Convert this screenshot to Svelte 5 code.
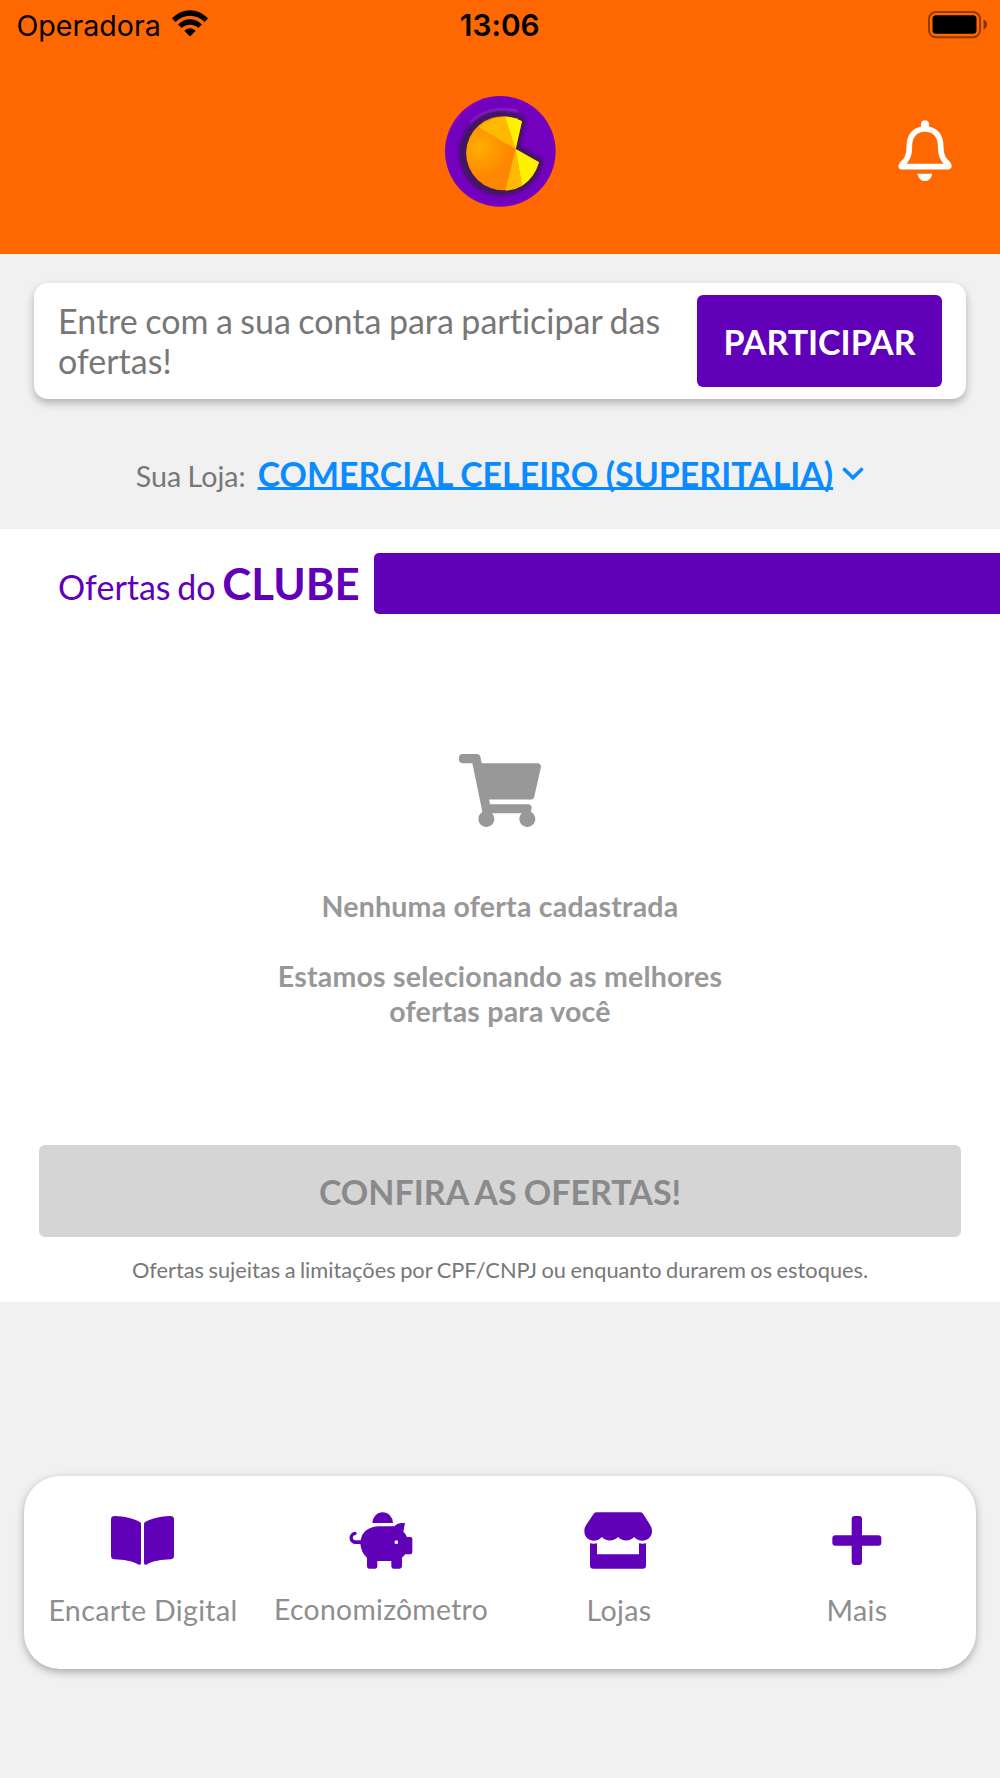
<script lang="ts">
  const store = 'COMERCIAL CELEIRO (SUPERITALIA)';

  const tabs = [
    {
      label: 'Encarte Digital',
      viewBox: '309 150 240 180',
      path: 'M345 168C372 169 400 175 418 185Q423 187 423 191V309Q423 316 416 314C397 303 370 299 343 298Q333 297 333 288V178Q333 168 345 168ZM510 168C483 169 455 175 437 185Q432 187 432 191V309Q432 316 439 314C458 303 485 299 512 298Q522 297 522 288V178Q522 168 510 168Z'
    },
    {
      label: 'Economizômetro',
      viewBox: '1023 150 240 180',
      small: true,
      path: 'M1117 189A31 32 0 0 1 1179 189ZM1133 199H1183Q1192 189 1204 189H1215L1210 215Q1217 221 1221 231H1231Q1237 231 1237 237V277Q1237 283 1231 283H1216L1206 293V319Q1206 326 1199 326H1180Q1174 326 1174 319V303H1132V319Q1132 326 1126 326H1107Q1101 326 1101 319V293Q1084 279 1081 252H1068A18 18 0 0 1 1066 215Q1070 215 1070 220Q1070 225 1066 225A8 8 0 0 0 1067 241H1082Q1088 204 1133 199ZM1189 241A5.5 5.5 0 1 0 1189 252A5.5 5.5 0 1 0 1189 241Z'
    },
    {
      label: 'Lojas',
      viewBox: '237 150 240 180',
      path: 'M291 157H420Q426 157 429 161L450 194Q456 203 456 213C456 243 420 251 402 231C392 244 366 245 354 231C342 245 316 244 306 231C288 251 253 243 253 213Q253 203 258 196L281 161Q284 157 291 157ZM270 250Q281 252 291 250V283H417V250Q428 252 438 250V317Q438 326 429 326H280Q270 326 270 317Z'
    },
    {
      label: 'Mais',
      viewBox: '951 150 240 180',
      path: 'M1064 168H1077Q1086 168 1086 177V226H1135Q1144 226 1144 235V248Q1144 257 1135 257H1086V306Q1086 315 1077 315H1064Q1055 315 1055 306V257H1006Q997 257 997 248V235Q997 226 1006 226H1055V177Q1055 168 1064 168Z'
    }
  ];
</script>

<svelte:head>
  <title>Ofertas do Clube</title>
</svelte:head>

<main class="app">
  <header>
    <div class="status">
      <div class="carrier">
        <span>Operadora</span>
        <svg width="36" height="27" viewBox="0 0 36 27">
          <path d="M0 8.5C10-2.5 26-2.5 36 8.5L32.5 12C24 3.7 12 3.7 3.5 12Z" />
          <path d="M6 14.5C13 7.5 23 7.5 30 14.5L26.3 18C21.5 13.8 14.5 13.8 9.7 18Z" />
          <path d="M12.3 20.7Q18 16 23.7 20.7L18 26.5Z" />
        </svg>
      </div>
      <strong>13:06</strong>
      <div class="battery">
        <svg width="60" height="28" viewBox="0 0 60 28">
          <rect x="1" y="1" width="51" height="25.3" rx="7" fill="none" stroke="#000" stroke-opacity=".42" stroke-width="2" />
          <rect x="4.5" y="4.3" width="44" height="18.5" rx="3.5" />
          <path d="M55.6 8.5Q59 10.5 59 13.6Q59 16.7 55.6 18.7Z" fill-opacity=".5" />
        </svg>
      </div>
    </div>
    <div class="brand">
      <svg class="logo" width="112" height="112" viewBox="42 45 336 336">
        <defs>
          <radialGradient id="coin" cx="148" cy="203" r="90" gradientUnits="userSpaceOnUse">
            <stop offset="0" stop-color="#ffae00" />
            <stop offset="1" stop-color="#ff8700" />
          </radialGradient>
          <linearGradient id="rim" x1="0" y1="0" x2="1" y2="1">
            <stop offset="0" stop-color="#b500ef" />
            <stop offset=".2" stop-color="#7500bf" />
            <stop offset="1" stop-color="#7500bf" />
          </linearGradient>
          <filter id="soft" x="-20%" y="-20%" width="140%" height="140%">
            <feGaussianBlur stdDeviation="2.5" />
          </filter>
        </defs>
        <circle cx="211" cy="214" r="166" fill="url(#rim)" />
        <circle cx="212" cy="215" r="161" fill="#7200bd" />
        <path d="M122 130Q172 76 262 94" fill="none" stroke="#9a40d4" stroke-width="5" filter="url(#soft)" />
        <path d="M257 207L276 124A111 111 0 1 0 327 247Z" fill="#431264" stroke="#431264" stroke-width="32" stroke-linejoin="round" transform="translate(-5 0)" filter="url(#soft)" />
        <path d="M257 207L276 124A111 111 0 1 0 327 247Z" fill="url(#coin)" />
        <path d="M257 207L147 142Q179 110 225 110Z" fill="#ffb900" />
        <path d="M257 207L225 110Q254 111 276 124Z" fill="#fff000" />
        <path d="M257 207L327 247Q313 294 276 318Z" fill="#fff000" />
        <path d="M257 207L276 318Q254 331 226 332Z" fill="#ffb900" />
      </svg>
      <button class="bell" aria-label="Notificações">
        <svg width="54" height="62" viewBox="114 362 162 186">
          <path d="M195 389C164 389 148 411 148 440C148 470 141 482 127 494Q120 502 127 502H263Q270 502 264 494C250 482 242 470 242 440C242 411 226 389 195 389Z" fill="none" stroke="#fff" stroke-width="17" />
          <path d="M183 390V375A12 12 0 0 1 207 375V390ZM172 523H217Q212 545 195 545Q177 545 172 523Z" fill="#fff" />
        </svg>
      </button>
    </div>
  </header>

  <section class="join">
    <p>Entre com a sua conta para participar das ofertas!</p>
    <button>PARTICIPAR</button>
  </section>

  <div class="store">
    <span>Sua Loja:</span>
    <a href="#loja">{store}</a>
    <svg width="22" height="14" viewBox="0 0 22 14">
      <path d="M2.5 2.5L11 10.8L19.5 2.5" fill="none" stroke="#0a8bff" stroke-width="3.6" stroke-linecap="round" />
    </svg>
  </div>

  <section class="offers">
    <div class="heading">
      <h2>Ofertas do <b>CLUBE</b></h2>
      <div class="bar"></div>
    </div>

    <div class="empty">
      <svg width="82" height="73" viewBox="0 0 576 512">
        <path fill="#989898" d="M528.12 301.319l47.273-208C578.806 78.301 567.391 64 551.99 64H159.208l-9.166-44.81C147.758 8.021 137.93 0 126.529 0H24C10.745 0 0 10.745 0 24v16c0 13.255 10.745 24 24 24h69.883l70.248 343.435C147.325 417.1 136 435.222 136 456c0 30.928 25.072 56 56 56s56-25.072 56-56c0-15.674-6.447-29.835-16.824-40h209.647C430.447 426.165 424 440.326 424 456c0 30.928 25.072 56 56 56s56-25.072 56-56c0-22.172-12.888-41.332-31.579-50.405l5.517-24.276c3.413-15.018-8.002-29.319-23.403-29.319H218.117l-6.545-32h293.145c11.206 0 20.92-7.754 23.403-18.681z" />
      </svg>
      <p>Nenhuma oferta cadastrada</p>
      <p>Estamos selecionando as melhores<br />ofertas para você</p>
    </div>

    <button class="check" disabled>CONFIRA AS OFERTAS!</button>
    <small>Ofertas sujeitas a limitações por CPF/CNPJ ou enquanto durarem os estoques.</small>
  </section>

  <nav>
    {#each tabs as tab}
      <button class="tab" class:small={tab.small}>
        <svg width="80" height="60" viewBox={tab.viewBox}>
          <path d={tab.path} fill="#6000b9" fill-rule="evenodd" />
        </svg>
        <span>{tab.label}</span>
      </button>
    {/each}
  </nav>
</main>

<style>
  :global(body) { background: #f1f1f1; }
  .app { width: 1000px; height: 1778px; overflow: hidden; display: flex; flex-direction: column; background: #f1f1f1; font-family: Lato, sans-serif; font-variant-ligatures: none; color: #777; }
  p, h2 { margin: 0; }
  svg { display: block; flex: none; }
  button { border: none; padding: 0; margin: 0; font-family: inherit; cursor: pointer; }

  header { height: 253.5px; flex: none; background: #ff6700; }
  .status { height: 50px; display: grid; grid-template-columns: 1fr auto 1fr; align-items: center; padding: 0 12px 0 16.5px; font-family: Inter, sans-serif; font-size: 28.6px; color: #000; }
  .carrier { display: flex; align-items: center; gap: 11.5px; }
  .carrier svg { margin-top: -3px; }
  .status strong { margin-right: 5px; font-size: 29.8px; font-weight: 600; }
  .battery { display: flex; justify-content: flex-end; margin-top: -1px; }
  .brand { display: grid; grid-template-columns: 1fr auto 1fr; align-items: center; padding: 44.5px 48px 0; }
  .logo { grid-column: 2; }
  .bell { justify-self: end; background: none; padding-top: 1px; }

  .join { flex: none; height: 115.5px; box-sizing: border-box; margin: 29.5px 34px 0; padding: 0 24px; border-radius: 14px; background: #fff; box-shadow: 0 4px 8px rgba(0, 0, 0, .27); display: flex; align-items: center; justify-content: space-between; }
  .join p { width: 625px; padding-top: 1px; font-size: 34px; line-height: 40.3px; word-spacing: -1.2px; }
  .join button { width: 245px; height: 92px; padding-top: 1px; border-radius: 6px; background: #6000b9; color: #fff; font-size: 34px; font-weight: 700; }

  .store { flex: none; height: 130px; box-sizing: border-box; padding-top: 51.5px; display: flex; align-items: baseline; justify-content: center; }
  .store span { font-size: 28.6px; margin-right: 12px; word-spacing: -1px; }
  .store a { font-size: 33.9px; line-height: 48px; font-weight: 700; color: #0a8bff; margin-right: 9px; word-spacing: -.5px; text-decoration-thickness: 2.5px; text-underline-offset: 0; text-decoration-skip-ink: none; }
  .store svg { align-self: flex-start; margin-top: 17px; }

  .offers { flex: none; height: 773.5px; background: #fff; display: flex; flex-direction: column; align-items: center; }
  .heading { align-self: stretch; height: 60.5px; display: flex; margin-top: 24.5px; color: #6000b9; }
  h2 { width: 316px; padding-left: 58px; font-size: 34px; line-height: 60px; font-weight: 400; white-space: nowrap; word-spacing: -2px; }
  h2 b { font-size: 43.8px; }
  .bar { flex: 1; height: 60.5px; border-radius: 5px 0 0 5px; background: #6000b9; }
  .empty { height: 390.5px; margin-top: 140.5px; display: flex; flex-direction: column; align-items: center; color: #989898; font-size: 28.5px; font-weight: 700; letter-spacing: .22px; line-height: 35.5px; text-align: center; }
  .empty svg { margin-bottom: 62px; }
  .empty p { margin-bottom: 34px; }
  .check { flex: none; width: 922px; height: 92px; padding-top: 2px; border-radius: 6px; background: #d5d5d5; color: #8a8a8a; font-size: 34px; font-weight: 700; word-spacing: -1px; }
  small { margin-top: 19px; font-size: 21.8px; line-height: 28px; word-spacing: -1.1px; }

  nav { flex: none; height: 193.5px; box-sizing: border-box; margin: 173.5px 24px 0; padding-top: 34px; border-radius: 36px; background: #fff; box-shadow: 0 3px 9px rgba(0, 0, 0, .3); display: grid; grid-template-columns: repeat(4, 1fr); align-items: start; }
  .tab { display: flex; flex-direction: column; align-items: center; gap: 23px; background: none; color: #8e8e8e; font-size: 28.6px; letter-spacing: .33px; line-height: 34px; white-space: nowrap; }
  .tab.small { gap: 22.5px; font-size: 28.3px; }
</style>
